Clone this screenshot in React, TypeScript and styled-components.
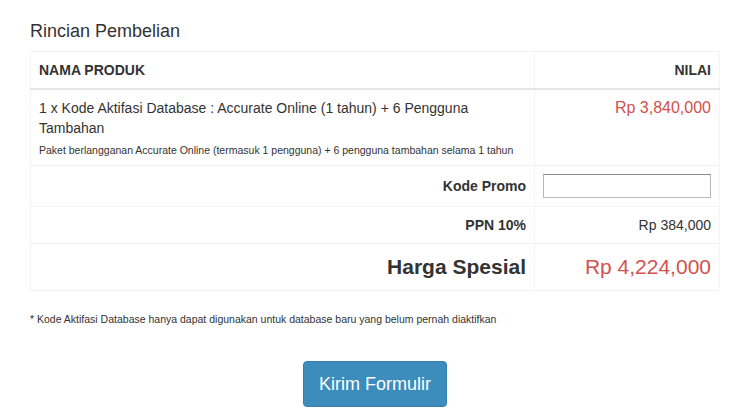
import * as React from 'react';
import styled, { createGlobalStyle } from 'styled-components';

const GlobalStyle = createGlobalStyle`
  body {
    margin: 0;
    background: #fff;
    font-family: "Liberation Sans", Arial, sans-serif;
    font-size: 14px;
    line-height: 1.42857;
    color: #333;
  }
`;

const Page = styled.div`
  padding: 21px 30px 0 30px;
`;

const Title = styled.h3`
  margin: 0 0 10px 0;
  font-size: 18px;
  font-weight: normal;
  line-height: 20px;
  color: #333;
`;

const Table = styled.table`
  width: 690px;
  border-collapse: collapse;
  border: 1px solid #f4f4f4;
`;

const HeadCell = styled.th<{ align?: string }>`
  padding: 8px;
  font-size: 14px;
  font-weight: bold;
  text-align: ${p => p.align || 'left'};
  border: 1px solid #f4f4f4;
  border-bottom: 2px solid #e4e4e4;
  line-height: 20px;
`;

const Cell = styled.td<{ align?: string; width?: string }>`
  padding: 8px;
  border: 1px solid #f4f4f4;
  text-align: ${p => p.align || 'left'};
  vertical-align: top;
  line-height: 20px;
  ${p => (p.width ? `width: ${p.width};` : '')}
`;

const LabelCell = styled(Cell)`
  text-align: right;
  vertical-align: middle;
  font-weight: bold;
`;

const BigLabel = styled(LabelCell)`
  font-size: 21px;
  line-height: 30px;
`;

const Note = styled.small`
  display: block;
  margin-top: 6px;
  font-size: 10.5px;
  line-height: 13px;
`;

const Price = styled.span<{ size?: number }>`
  color: #d0524e;
  font-size: ${p => p.size || 16}px;
  line-height: ${p => (p.size && p.size > 18 ? 30 : 20)}px;
`;

const PromoInput = styled.input`
  display: block;
  box-sizing: border-box;
  width: 100%;
  height: 24px;
  margin: 0;
  border: 1px solid #b8b8b8;
  border-top-color: #8a8a8a;
  border-radius: 0;
  padding: 2px 4px;
  font-family: inherit;
  font-size: 13px;
  outline: none;
`;

const FootNote = styled.p`
  margin: 21px 0 0 0;
  font-size: 10.5px;
  line-height: 14px;
`;

const Actions = styled.div`
  display: flex;
  justify-content: center;
  margin-top: 35px;
`;

const SubmitButton = styled.button`
  background: #3c8dbc;
  color: #fff;
  border: 1px solid #367fa9;
  border-radius: 4px;
  height: 46px;
  padding: 0 15px;
  font-family: "Liberation Sans", Arial, sans-serif;
  font-size: 18px;
  cursor: pointer;
  box-shadow: 0 1px 2px rgba(0, 0, 0, 0.08);
`;

const App = () => {
  return (
    <>
      <GlobalStyle />
      <Page>
        <Title>Rincian Pembelian</Title>
        <Table>
          <thead>
            <tr>
              <HeadCell>NAMA PRODUK</HeadCell>
              <HeadCell align="right">NILAI</HeadCell>
            </tr>
          </thead>
          <tbody>
            <tr>
              <Cell width="487px">
                1 x Kode Aktifasi Database : Accurate Online (1 tahun) + 6 Pengguna Tambahan
                <Note>
                  Paket berlangganan Accurate Online (termasuk 1 pengguna) + 6 pengguna tambahan selama 1 tahun
                </Note>
              </Cell>
              <Cell align="right">
                <Price>Rp 3,840,000</Price>
              </Cell>
            </tr>
            <tr>
              <LabelCell>Kode Promo</LabelCell>
              <Cell>
                <PromoInput type="text" />
              </Cell>
            </tr>
            <tr>
              <LabelCell>PPN 10%</LabelCell>
              <Cell align="right">Rp 384,000</Cell>
            </tr>
            <tr>
              <BigLabel>Harga Spesial</BigLabel>
              <Cell align="right">
                <Price size={21}>Rp 4,224,000</Price>
              </Cell>
            </tr>
          </tbody>
        </Table>
        <FootNote>
          * Kode Aktifasi Database hanya dapat digunakan untuk database baru yang belum pernah diaktifkan
        </FootNote>
        <Actions>
          <SubmitButton type="button">Kirim Formulir</SubmitButton>
        </Actions>
      </Page>
    </>
  );
};

export default App;
